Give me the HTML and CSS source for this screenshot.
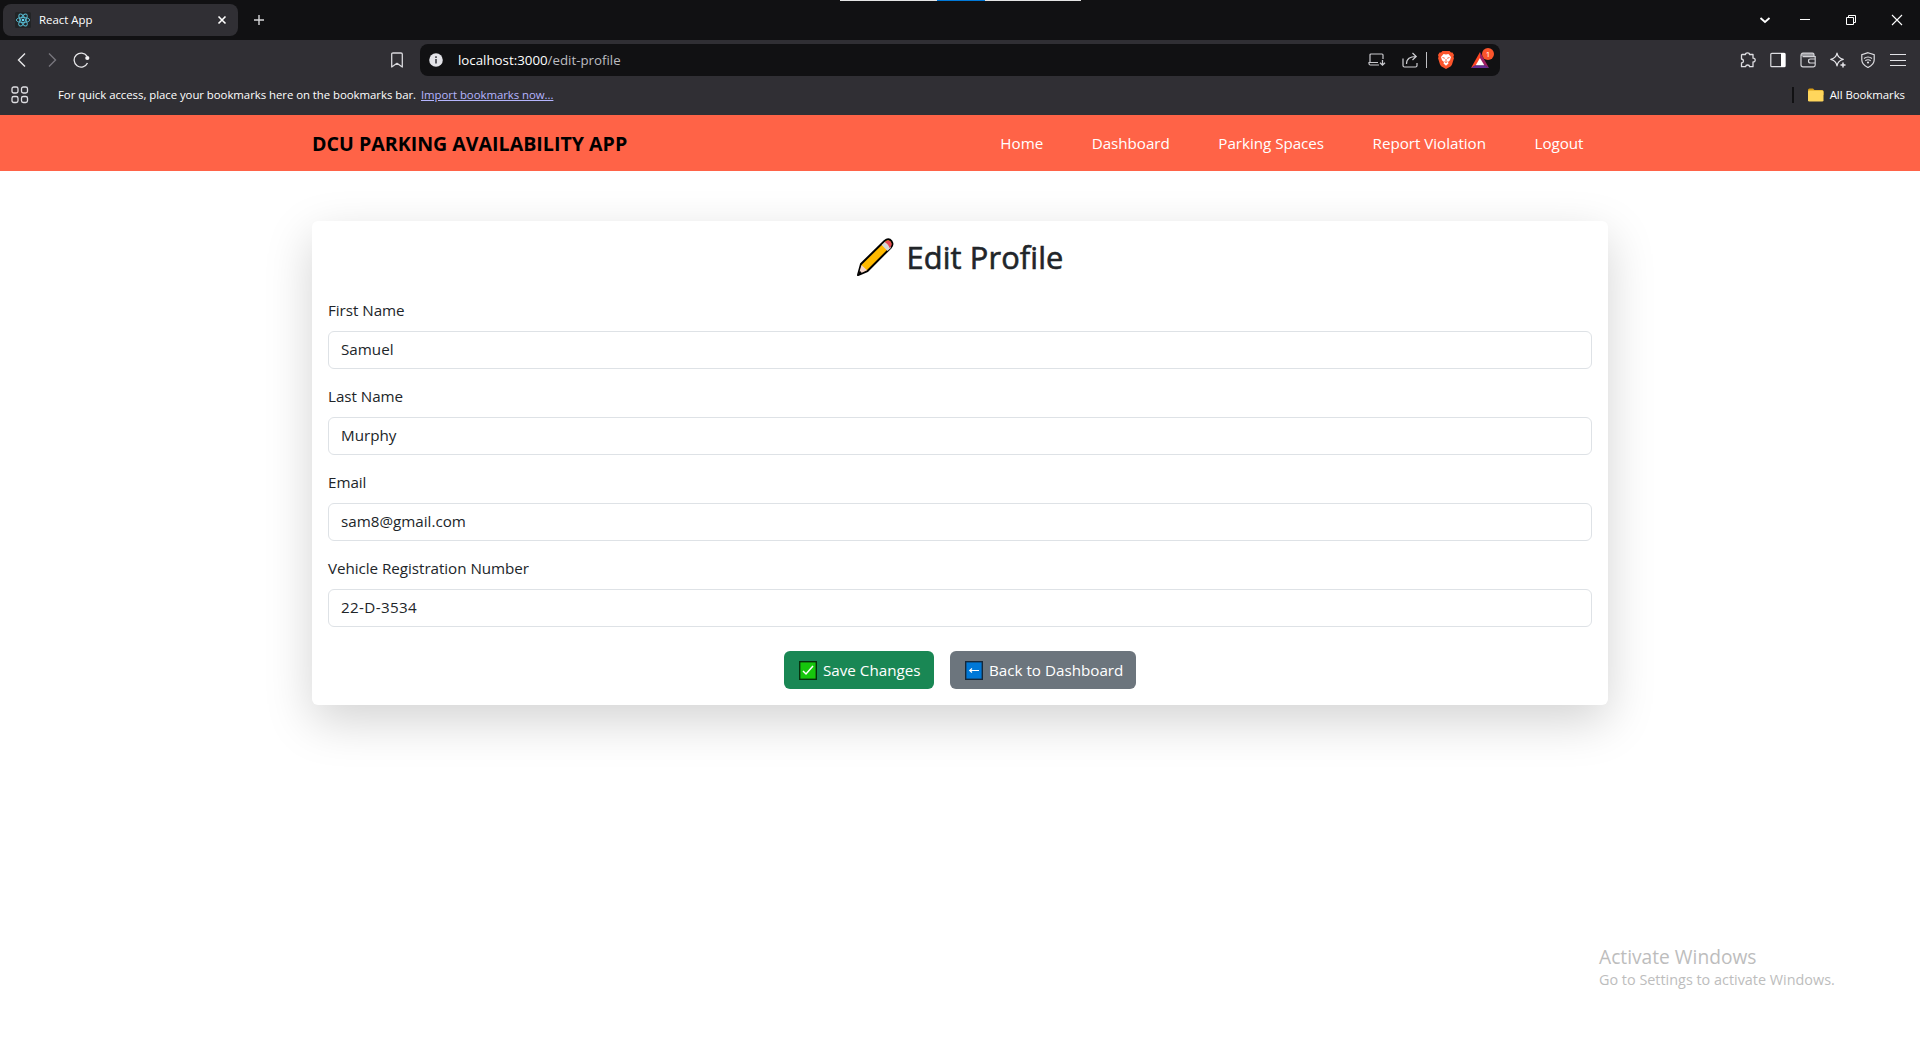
FILE: index.html
```
<!DOCTYPE html>
<html lang="en">
<head>
<meta charset="utf-8">
<title>React App</title>
<link rel="stylesheet" href="styles.css">
</head>
<body>
<header class="browser">
  <div class="tabstrip">
    <div class="tab">
      <svg class="favicon" width="16" height="16" viewBox="0 0 16 16"><rect width="16" height="16" rx="1.5" fill="#222426"/><g fill="none" stroke="#58bcd3" stroke-width=".9"><ellipse cx="8" cy="8" rx="6.7" ry="2.6"/><ellipse cx="8" cy="8" rx="6.7" ry="2.6" transform="rotate(60 8 8)"/><ellipse cx="8" cy="8" rx="6.7" ry="2.6" transform="rotate(120 8 8)"/></g><circle cx="8" cy="8" r="1.3" fill="#61dafb"/></svg>
      <span class="tab-title">React App</span>
      <svg class="tab-close" width="10" height="10" viewBox="0 0 10 10"><path d="M1.5 1.5l7 7M8.500 1.500l-7 7" stroke="#fff" stroke-width="1.6"/></svg>
    </div>
    <svg class="new-tab" width="12" height="12" viewBox="0 0 12 12"><path d="M6 1v10M1 6h10" stroke="#d6d6d9" stroke-width="1.4"/></svg>
    <div class="window-controls">
      <svg width="12" height="12" viewBox="0 0 12 12"><path d="M1.500 4l4.500 4 4.500-4" fill="none" stroke="#fff" stroke-width="1.8"/></svg>
      <svg width="12" height="12" viewBox="0 0 12 12"><path d="M1 5.500h10" stroke="#fff"/></svg>
      <svg width="12" height="12" viewBox="0 0 12 12"><path d="M1.500 3.500h7v7h-7zM3.500 3.500v-2h7v7h-2" fill="none" stroke="#fff"/></svg>
      <svg width="12" height="12" viewBox="0 0 12 12"><path d="M1 1l10 10M11 1L1 11" stroke="#fff" stroke-width="1.100"/></svg>
    </div>
    <div class="top-strip"><i></i><b></b><i></i></div>
  </div>
  <div class="toolbar">
    <svg class="back" width="16" height="16" viewBox="0 0 16 16"><path d="M11 1.500L4.500 8l6.500 6.500" fill="none" stroke="#e8e8ea" stroke-width="1.400"/></svg>
    <svg class="forward" width="16" height="16" viewBox="0 0 16 16"><path d="M5 1.500L11.500 8 5 14.500" fill="none" stroke="#77767d" stroke-width="1.400"/></svg>
    <svg class="reload" width="18" height="16" viewBox="0 0 18 16"><path d="M14.500 11A7 7 0 1 1 14 4.200" fill="none" stroke="#e8e8ea" stroke-width="1.300"/><circle cx="14.300" cy="6" r="2.100" fill="#f4f4f6"/></svg>
    <svg class="bookmark" width="14" height="16" viewBox="0 0 14 16"><path d="M1.700 2.200Q1.700 1 3 1h8q1.300 0 1.300 1.200V15L7 11.300 1.700 15z" fill="none" stroke="#d8d8dc" stroke-width="1.300" stroke-linejoin="round"/></svg>
    <div class="urlbar">
      <svg width="14" height="14" viewBox="0 0 14 14"><circle cx="7" cy="7" r="6.800" fill="#e3e3e8"/><path d="M7 6v4.400M7 3.200v1.700" stroke="#333338" stroke-width="1.500"/></svg>
      <span class="url">localhost:3000<em>/edit-profile</em></span>
      <div class="url-icons">
        <svg width="18" height="14" viewBox="0 0 18 14"><path d="M11 12H2.500Q1 12 1 10.500V9.500H10M2 9.500V2q0-1 1-1h11q1 0 1 1v4" fill="none" stroke="#c9c9cd" stroke-width="1.200"/><path d="M14.500 7v5M12 9.700l2.500 2.500L17 9.700" fill="none" stroke="#c9c9cd" stroke-width="1.300"/></svg>
        <svg width="16" height="16" viewBox="0 0 16 16"><path d="M1 6.500v7q0 1.500 1.500 1.500h11q1.500 0 1.500-1.500V11M4.500 12C4.500 6.500 8 4.500 14 4.500M10.500 1L14.200 4.500 10.500 8" fill="none" stroke="#d0d0d4" stroke-width="1.200"/></svg>
        <i class="url-separator"></i>
        <svg width="16" height="18" viewBox="0 0 16 18"><path d="M4.500 0h7L13 1.600l1.500-.2L16 4l-.6 2L16 7l-2 6.500q-.5 1.200-1.500 2L8 18l-4.500-2.500q-1-.8-1.500-2L0 7l.6-1L0 4l1.500-2.600 1.500.2z" fill="#fb542b"/><path d="M8 3.600l2.400-.7 2.600 3-1 3.400-2 1.600.5 1.500L8 14.700 5.500 12.400 6 10.900 4 9.300l-1-3.400 2.600-3z" fill="#fff"/><path d="M4.500 6.500l2.300.8M11.500 6.500l-2.300.8M8 8v2.700M6.500 10.700L8 11.500l1.500-.8" stroke="#fb542b" stroke-width=".9" fill="none"/></svg>
        <div class="rewards">
          <svg width="18" height="16" viewBox="0 0 18 16"><path d="M9 0L0 16l9-5z" fill="#ff4724"/><path d="M9 0l9 16-9-5z" fill="#9e1f63"/><path d="M0 16h18l-4-2.700H4z" fill="#662d91"/><path d="M9 6l4.300 7.300H4.700z" fill="#fff"/></svg>
          <span>1</span>
        </div>
      </div>
    </div>
    <div class="actions">
      <svg width="16" height="16" viewBox="0 0 16 16"><path d="M2 2.500h3.500Q5.500.8 7.500.8t2 1.700H13v3.700q2.200 0 2.200 1.900T13 10v4.700H9.600Q9.400 13 7.600 13t-2 1.700H1.500V11Q3.500 10.700 3.500 9t-2-2V3z" fill="none" stroke="#dedee2" stroke-width="1.300" stroke-linejoin="round"/></svg>
      <svg width="16" height="16" viewBox="0 0 16 16"><rect x=".8" y="1.300" width="14.400" height="13.400" rx="1" fill="none" stroke="#dedee2" stroke-width="1.200"/><path d="M11 1h4v14h-4z" fill="#fff"/></svg>
      <svg width="16" height="16" viewBox="0 0 16 16"><path d="M1 3.500Q1 1.200 3 1.200h10q1 0 1 1V4H1z" fill="#9b9ba0"/><path d="M1 3.500Q1 1.200 3 1.200h9.500q1.500 0 1.500 1.500V5M1 3.500v9.300Q1 14.800 3 14.800h10.500q1.700 0 1.700-1.700V4.700H2.500M15 7h-4.500Q8.500 7 8.500 9t2 2H15" fill="none" stroke="#d3d3d7" stroke-width="1.200"/></svg>
      <svg width="16" height="16" viewBox="0 0 16 16"><path d="M7 1q.9 5.200 6.300 6.300Q7.900 8.500 7 13.800 6.100 8.500.7 7.300 6.100 6.200 7 1z" fill="none" stroke="#e6e6ea" stroke-width="1.200" stroke-linejoin="round"/><path d="M13 10.500v5M10.500 13h5" stroke="#e6e6ea" stroke-width="1.500"/></svg>
      <svg width="16" height="16" viewBox="0 0 16 16"><path d="M8 .7l6.200 2v5.100q0 5-6.200 7.700Q1.800 12.800 1.800 7.800V2.700z" fill="none" stroke="#dedee2" stroke-width="1.200"/><path d="M4 6.500q4-3 8 0M5.300 8.700q2.700-2 5.400 0" fill="none" stroke="#dedee2" stroke-width="1.100"/><circle cx="8" cy="10.500" r="1.100" fill="#dedee2"/></svg>
      <svg width="16" height="16" viewBox="0 0 16 16"><path d="M0 2.500h16M0 8.500h16M0 13.500h16" stroke="#e2e2e6" stroke-width="1.200"/></svg>
    </div>
  </div>
  <div class="bookmarks">
    <svg class="apps" width="18" height="18" viewBox="0 0 18 18"><g fill="none" stroke="#dedee2" stroke-width="1.300"><rect x="1" y="1" width="6" height="6" rx="1.800"/><rect x="10.500" y="1" width="6" height="6" rx="1.800"/><rect x="1" y="10.500" width="6" height="6" rx="1.800"/><rect x="10.500" y="10.500" width="6" height="6" rx="1.800"/></g></svg>
    <span class="hint">For quick access, place your bookmarks here on the bookmarks bar.</span>
    <a class="import">Import bookmarks now...</a>
    <i class="bar-separator"></i>
    <svg width="16" height="14" viewBox="0 0 16 14"><path d="M0 2q0-1.500 1.500-1.500H5L6.500 2H14q1.500 0 1.500 1.500V7H0z" fill="#d99e16"/><rect y="2.500" width="15.500" height="11" rx="1.300" fill="#ffd65c"/></svg>
    <span class="all">All Bookmarks</span>
  </div>
</header>

<nav class="navbar">
  <span class="brand">DCU PARKING AVAILABILITY APP</span>
  <div class="links">
    <a>Home</a><a>Dashboard</a><a>Parking Spaces</a><a>Report Violation</a><a>Logout</a>
  </div>
</nav>

<main class="card">
  <h2 class="title">
    <svg width="38" height="38" viewBox="0 0 38 38"><path d="M4 26L27.500 3q4-3.500 7 .2 2.200 3.300-.8 6.500L10.500 33 1 37z" fill="#ffb900" stroke="#000" stroke-width="2" stroke-linejoin="round"/><path d="M4.500 27L1.700 36.300 10 32.300z" fill="#f5d5c9"/><path d="M2.700 32.500L1 37l4-1.700z" fill="#000"/><path d="M24.700 7L28 3.800l6 6L30.500 13z" fill="#d5d8da"/><path d="M27.700 4q3.400-3 6-.2 2 2.800-.5 5.500l-.8.700q-.7-3.800-4.700-6z" fill="#e74856"/></svg>
    <span class="title-text">Edit Profile</span>
  </h2>
  <div class="field"><label>First Name</label><div class="input"><span>Samuel</span></div></div>
  <div class="field"><label>Last Name</label><div class="input"><span>Murphy</span></div></div>
  <div class="field"><label>Email</label><div class="input"><span>sam8@gmail.com</span></div></div>
  <div class="field"><label>Vehicle Registration Number</label><div class="input registration"><span>22-D-3534</span></div></div>
  <div class="buttons">
    <button class="btn save"><svg width="18" height="19" viewBox="0 0 18 19"><rect x=".7" y=".7" width="16.600" height="17.600" fill="#16c60c" stroke="#06300a" stroke-width="1.400"/><path d="M4 10l3 3 7-8" fill="none" stroke="#fff" stroke-width="1.500"/></svg><span>Save Changes</span></button>
    <button class="btn dash"><svg width="18" height="19" viewBox="0 0 18 19"><rect x=".7" y=".7" width="16.600" height="17.600" fill="#0078d7" stroke="#16283a" stroke-width="1.400"/><path d="M4.500 9.500H14M7 7.500l-2.300 2L7 11.500" fill="none" stroke="#fff" stroke-width="1.200"/></svg><span>Back to Dashboard</span></button>
  </div>
</main>

<aside class="activate">
  <div class="act1">Activate Windows</div>
  <div class="act2">Go to Settings to activate Windows.</div>
</aside>
</body>
</html>
```
FILE: styles.css
```
* { box-sizing: border-box; }
body {
  margin: 0;
  height: 1040px;
  overflow: hidden;
  position: relative;
  background: #fff;
  color: #212529;
  font: 15.2px/24px "Open Sans", "Noto Sans", sans-serif;
}
svg { display: block; flex: none; }
span, a, label { white-space: nowrap; }

.browser { height: 115px; background: #302f34; color: #fff; font-size: 11.4px; }
.tabstrip { position: relative; display: flex; align-items: center; height: 40px; background: #111113; padding-left: 3px; }
.tab { display: flex; align-items: center; width: 235px; height: 32px; padding: 0 11px 0 12px; border-radius: 8px; background: #302f34; }
.tab-title { margin-left: 8px; }
.tab-close { margin-left: auto; }
.new-tab { margin-left: 15px; }
.window-controls { display: flex; margin-left: auto; padding-right: 17px; gap: 34px; }
.window-controls svg:first-child { margin-right: -6px; }
.top-strip { position: absolute; top: 0; left: 840px; display: flex; width: 241px; height: 1px; }
.top-strip i { flex: 1; background: #e4e4e4; }
.top-strip b { width: 48px; background: #0078d7; }

.toolbar { display: flex; align-items: center; height: 40px; padding-left: 14px; }
.forward { margin-left: 14px; }
.reload { margin-left: 13px; }
.bookmark { margin-left: 299px; }
.urlbar { display: flex; align-items: center; width: 1080px; height: 32px; margin-left: 16px; padding: 0 11px 0 9px; border-radius: 8px; background: #111113; }
.url { margin-left: 15px; font-size: 13.3px; }
.url em { font-style: normal; color: #bcbcc0; }
.url-icons { display: flex; align-items: center; margin-left: auto; }
.url-icons > svg:nth-child(2) { margin-left: 16px; }
.url-separator { width: 1px; height: 16px; margin: 0 11px 0 8px; background: #c0c0c4; }
.rewards { position: relative; margin-left: 17px; }
.rewards span { position: absolute; left: 11px; top: -4px; width: 12px; height: 12px; border-radius: 50%; background: #fb542b; font-size: 8px; line-height: 12px; text-align: center; }
.actions { display: flex; gap: 14px; margin-left: auto; padding-right: 14px; }

.bookmarks { display: flex; align-items: center; height: 35px; padding: 0 15px 5px 11px; letter-spacing: -.043px; }
.hint { margin-left: 29px; }
.import { margin-left: 5px; color: #b5b5ff; text-decoration: underline; }
.bar-separator { width: 2px; height: 16px; margin: 0 14px 0 auto; background: #111113; }
.all { margin-left: 6px; }

.navbar { display: flex; align-items: center; justify-content: space-between; height: 56px; padding: 0 312px; background: #ff6347; }
.brand { color: #000; font-size: 19.6px; font-weight: 700; padding-top: 1px; }
.links { display: flex; gap: 48.5px; padding: 0 24.500px 1px 0; color: #fff; letter-spacing: -.03px; }

.card { width: 1296px; height: 484px; margin: 50px auto 0; padding: 16px; border-radius: 6px; background: #fff; box-shadow: 0 16px 48px rgba(0, 0, 0, .175); }
.title { display: flex; align-items: center; justify-content: center; height: 38px; margin: 0 0 24px; padding-top: 1px; font-size: 30.8px; line-height: 38px; font-weight: 500; letter-spacing: .12px; -webkit-text-stroke: .6px #212529; }
.title-text { margin-left: 12px; }
.field { margin-bottom: 16px; }
.field label { display: block; height: 24px; margin-bottom: 8px; line-height: 23px; letter-spacing: -.04px; }
.input { height: 38px; padding: 6px 12px; border: 1px solid #dee2e6; border-radius: 6px; line-height: 23px; }
.registration { letter-spacing: .35px; }
.buttons { display: flex; justify-content: center; gap: 16px; padding-top: 8px; }
.btn { display: flex; align-items: center; height: 38px; padding: 0 0 0 15px; border: 0; border-radius: 6px; color: #fff; font: inherit; }
.btn span { margin-left: 6px; padding-bottom: 1px; }
.save { width: 150px; background: #198754; }
.dash { width: 186px; background: #6c757d; }

.activate { position: absolute; left: 1599px; top: 943px; color: #bdbdbd; white-space: nowrap; }
.act1 { font-size: 19.200px; line-height: 28px; }
.act2 { font-size: 14.400px; line-height: 18px; }
```
